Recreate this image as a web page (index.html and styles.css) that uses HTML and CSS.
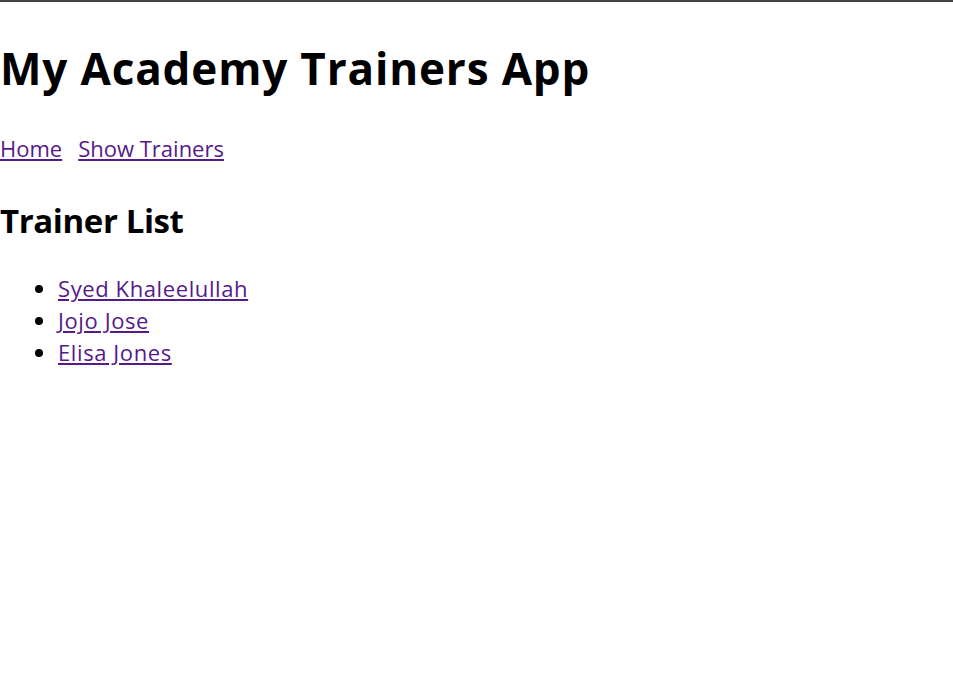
FILE: index.html
```html
<!DOCTYPE html>
<html>
<head>
<meta charset="utf-8">
<title>My Academy Trainers App</title>
<link rel="stylesheet" href="styles.css">
</head>
<body>
<div class="app">
  <h1 class="title">My Academy Trainers App</h1>
  <nav class="nav">
    <a href="#home">Home</a>
    <a href="#trainers">Show Trainers</a>
  </nav>
  <h2 class="subtitle">Trainer List</h2>
  <ul class="list">
    <li><a href="#1">Syed Khaleelullah</a></li>
    <li><a href="#2">Jojo Jose</a></li>
    <li><a href="#3">Elisa Jones</a></li>
  </ul>
</div>
</body>
</html>
```
FILE: styles.css
```css
html, body {
  margin: 0;
  padding: 0;
  background: #fff;
}
body {
  border-top: 2px solid #444;
  font-family: "Open Sans", sans-serif;
  color: #000;
}
a {
  color: #551a8b;
  text-decoration: underline;
}
.title {
  font-size: 44px;
  line-height: 60px;
  font-weight: 700;
  letter-spacing: 0.85px;
  margin: 36px 0 0 0;
}
.nav {
  display: flex;
  gap: 16px;
  font-size: 22px;
  line-height: 30px;
  margin-top: 35px;
}
.subtitle {
  font-size: 33px;
  line-height: 45px;
  font-weight: 700;
  letter-spacing: -0.4px;
  margin: 35px 0 0 0;
}
.list {
  margin: 29px 0 0 0;
  padding-left: 58px;
  font-size: 22px;
  line-height: 32px;
  letter-spacing: 0.6px;
}
```
